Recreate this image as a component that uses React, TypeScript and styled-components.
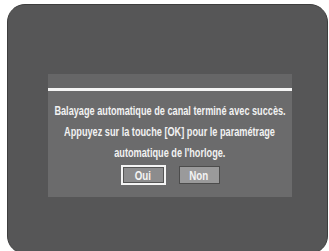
import React from "react";
import styled, { createGlobalStyle } from "styled-components";

const Global = createGlobalStyle`
  html, body { margin: 0; padding: 0; background: #ffffff; }
  body { width: 329px; height: 251px; overflow: hidden; }
`;

const Frame = styled.div`
  box-sizing: border-box;
  margin: 4px 0 0 7px;
  width: 321px;
  height: 250px;
  border-radius: 18px;
  background: #565657;
  border: 1px solid #3e3e3e;
  padding: 69px 0 0 40px;
`;

const Panel = styled.div`
  width: 244px;
  height: 123px;
  background: #6b6b6c;
  display: flex;
  flex-direction: column;
`;

const Header = styled.div`
  height: 14px;
  background: #666667;
`;

const Rule = styled.div`
  height: 3px;
  background: #f4f4f4;
`;

const Body = styled.div`
  display: flex;
  flex-direction: column;
  align-items: center;
  padding-top: 9px;
`;

const Line = styled.div`
  font-family: "Liberation Sans", Arial, sans-serif;
  font-weight: bold;
  font-size: 13px;
  line-height: 21px;
  color: #f2f2f2;
  white-space: nowrap;
  transform: scaleX(0.705);
  transform-origin: center;
`;

const Buttons = styled.div`
  display: flex;
  gap: 13px;
  align-items: center;
  margin-top: 2px;
`;

const Btn = styled.div<{ $selected?: boolean }>`
  box-sizing: border-box;
  display: flex;
  align-items: center;
  justify-content: center;
  width: ${(p) => (p.$selected ? 45 : 41)}px;
  height: ${(p) => (p.$selected ? 20 : 18)}px;
  background: ${(p) => (p.$selected ? "#8c8c8d" : "#9a9a9b")};
  border: ${(p) => (p.$selected ? "2px solid #f4f4f4" : "1px solid #4c4c4c")};
  box-shadow: ${(p) => (p.$selected ? "inset 0 0 0 1px #555" : "none")};
`;

const BtnLabel = styled.span`
  font-family: "Liberation Sans", Arial, sans-serif;
  font-weight: bold;
  font-size: 13px;
  color: #f4f4f4;
  transform: scaleX(0.75);
`;

export default function App() {
  return (
    <>
      <Global />
      <Frame>
        <Panel>
          <Header />
          <Rule />
          <Body>
            <Line>Balayage automatique de canal terminé avec succès.</Line>
            <Line>Appuyez sur la touche [OK] pour le paramétrage</Line>
            <Line>automatique de l'horloge.</Line>
            <Buttons>
              <Btn $selected>
                <BtnLabel>Oui</BtnLabel>
              </Btn>
              <Btn>
                <BtnLabel>Non</BtnLabel>
              </Btn>
            </Buttons>
          </Body>
        </Panel>
      </Frame>
    </>
  );
}
